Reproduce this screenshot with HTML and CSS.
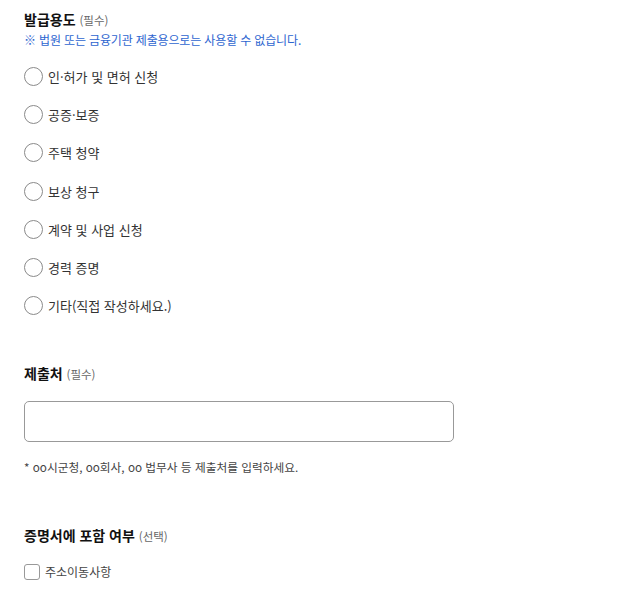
FILE: index.html
```html
<!DOCTYPE html>
<html lang="ko">
<head>
<meta charset="utf-8">
<link rel="stylesheet" href="styles.css">
</head>
<body>
<div class="form">
  <section class="sec sec-purpose">
    <h2 class="title">발급용도 <span class="tag">(필수)</span></h2>
    <p class="note">※ 법원 또는 금융기관 제출용으로는 사용할 수 없습니다.</p>
    <ul class="radios">
      <li class="radio"><span class="circle"></span><span class="label">인·허가 및 면허 신청</span></li>
      <li class="radio"><span class="circle"></span><span class="label">공증·보증</span></li>
      <li class="radio"><span class="circle"></span><span class="label">주택 청약</span></li>
      <li class="radio"><span class="circle"></span><span class="label">보상 청구</span></li>
      <li class="radio"><span class="circle"></span><span class="label">계약 및 사업 신청</span></li>
      <li class="radio"><span class="circle"></span><span class="label">경력 증명</span></li>
      <li class="radio"><span class="circle"></span><span class="label">기타(직접 작성하세요.)</span></li>
    </ul>
  </section>
  <section class="sec sec-dest">
    <h2 class="title">제출처 <span class="tag">(필수)</span></h2>
    <div class="input"></div>
    <p class="hint">* oo시군청, oo회사, oo 법무사 등 제출처를 입력하세요.</p>
  </section>
  <section class="sec sec-opt">
    <h2 class="title">증명서에 포함 여부 <span class="tag">(선택)</span></h2>
    <div class="check"><span class="box"></span><span class="label">주소이동사항</span></div>
  </section>
</div>
</body>
</html>
```
FILE: styles.css
```css
* { box-sizing: border-box; }
html, body { margin: 0; padding: 0; background: #fff; }
body {
  font-family: "Noto Sans CJK KR", "Noto Sans", sans-serif;
  color: #222;
}
.form { padding: 9px 0 0 24px; width: 455px; }
.title {
  margin: 0;
  font-size: 14px;
  font-weight: 700;
  line-height: 20px;
  color: #111;
}
.tag { font-size: 11.5px; font-weight: 400; color: #666; }
.note {
  margin: 0;
  font-size: 12px;
  letter-spacing: -0.15px;
  line-height: 20px;
  color: #2e66d0;
}
.radios { list-style: none; margin: 7px 0 0; padding: 0; display: flex; flex-direction: column; }
.radio { display: flex; align-items: center; height: 38.3px; }
.circle {
  width: 19px; height: 19px; border-radius: 50%;
  border: 1px solid #8a8a8a; margin-right: 5px; flex: none;
}
.label { font-size: 13px; color: #333; }
.sec-dest { margin-top: 38px; }
.input {
  margin-top: 17px;
  height: 41px;
  border: 1px solid #999;
  border-radius: 5px;
  width: 430px;
}
.hint { margin: 15px 0 0; font-size: 11.7px; line-height: 20px; color: #444; }
.sec-opt { margin-top: 48px; }
.check { display: flex; align-items: center; margin-top: 17px; }
.box {
  width: 16px; height: 16px; border: 1px solid #999; border-radius: 3px;
  margin-right: 5px; flex: none;
}
.check .label { font-size: 12px; color: #444; }
```
